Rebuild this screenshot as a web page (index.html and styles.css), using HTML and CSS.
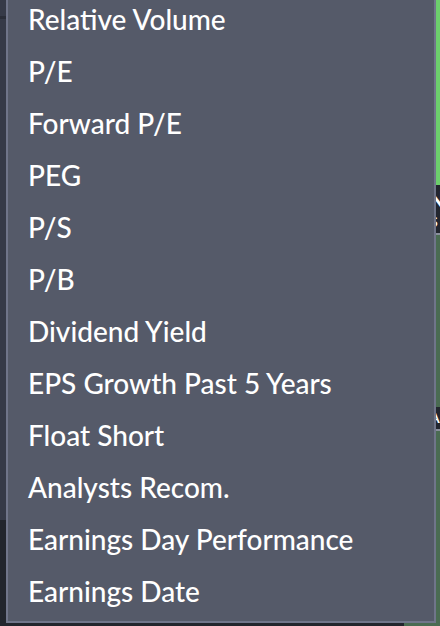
FILE: index.html
```html
<!DOCTYPE html>
<html>
<head>
<meta charset="utf-8">
<link rel="stylesheet" href="styles.css">
</head>
<body>
<div class="page">
  <div class="bg-left">
    <div class="seg seg-top"></div>
    <div class="seg seg-line"></div>
    <div class="seg seg-mid"></div>
    <div class="seg seg-low"></div>
  </div>
  <div class="bg-center"></div>
  <div class="bg-right">
    <div class="rs rs-green"></div>
    <div class="rs rs-dark"><span class="frag">N</span><span class="frag small">S</span></div>
    <div class="rs rs-rule"></div>
    <div class="rs rs-dgreen a"></div>
    <div class="rs rs-dark b"><span class="frag small">A</span></div>
    <div class="rs rs-rule"></div>
    <div class="rs rs-dgreen c"><span class="frag small low">-</span><span class="frag small low2">t</span></div>
  </div>
</div>
<div class="bottom-strip"><div class="bs-dark"></div><div class="bs-green"></div></div>
<ul class="menu">
  <li class="item">Relative Volume</li>
  <li class="item">P/E</li>
  <li class="item">Forward P/E</li>
  <li class="item">PEG</li>
  <li class="item">P/S</li>
  <li class="item">P/B</li>
  <li class="item">Dividend Yield</li>
  <li class="item">EPS Growth Past 5 Years</li>
  <li class="item">Float Short</li>
  <li class="item">Analysts Recom.</li>
  <li class="item">Earnings Day Performance</li>
  <li class="item">Earnings Date</li>
</ul>
</body>
</html>
```

FILE: styles.css
```css
html, body {
  margin: 0;
  padding: 0;
  width: 440px;
  height: 626px;
  overflow: hidden;
  background: #22252d;
  font-family: Lato, "Liberation Sans", sans-serif;
}
.page {
  display: flex;
  height: 623px;
}
.bg-left {
  width: 6px;
  display: flex;
  flex-direction: column;
}
.seg-top { height: 16px; background: #363a48; }
.seg-line { height: 3px; background: #2a2d38; }
.seg-mid { height: 501px; background: #363a48; }
.seg-low { flex: 1; background: #22252d; }
.bg-center { flex: 1; background: #363a48; }
.bg-right {
  width: 4px;
  display: flex;
  flex-direction: column;
  overflow: hidden;
}
.rs-green { height: 185px; background: #6ccf6c; }
.rs-dark {
  height: 48px;
  background: #23262f;
  position: relative;
  overflow: hidden;
}
.rs-dark.b { height: 22px; }
.rs-rule { height: 2px; background: #8a8f9c; }
.rs-dgreen { background: #4a6b52; position: relative; overflow: hidden; }
.rs-dgreen.a { height: 172px; }
.rs-dgreen.c { flex: 1; }
.frag {
  position: absolute;
  left: -8px;
  top: 4px;
  color: #ffffff;
  font-size: 22px;
  font-weight: 700;
  line-height: 1;
}
.frag.small { top: 30px; font-size: 14px; left: -6px; }
.rs-dark.b .frag.small { top: 4px; }
.frag.low { top: 140px; }
.frag.low2 { top: 162px; }
.bottom-strip {
  display: flex;
  height: 3px;
}
.bs-dark { width: 404px; background: #22252d; }
.bs-green { flex: 1; background: #4a6b52; }
.menu {
  position: absolute;
  left: 6px;
  top: -13px;
  width: 430px;
  box-sizing: border-box;
  margin: 0;
  padding: 4px 0;
  list-style: none;
  background: #555a69;
  border: 2px solid #70758a;
}
.item {
  height: 52px;
  line-height: 52px;
  padding-left: 20px;
  color: #ffffff;
  font-size: 28px;
  font-weight: 500;
  white-space: nowrap;
}
```
